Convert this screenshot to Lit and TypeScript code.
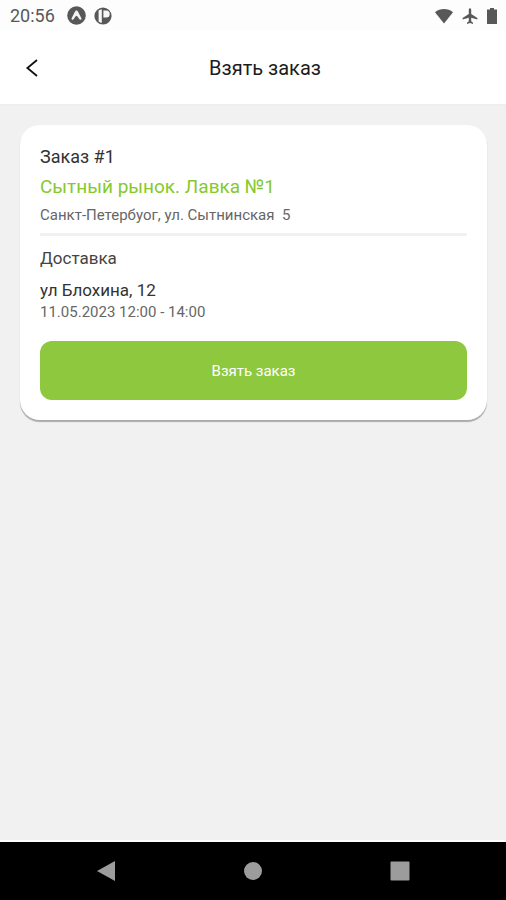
import { LitElement, html, css } from "lit";
import { customElement, property } from "lit/decorators.js";

@customElement("status-bar")
class StatusBar extends LitElement {
  static styles = css`
    :host {
      display: flex;
      align-items: center;
      justify-content: space-between;
      height: 31px;
      padding: 0 8px 0 10px;
      color: #585858;
      background: #fdfdfd;
    }
    .group {
      display: flex;
      align-items: center;
    }
    .left {
      gap: 8px;
    }
    .right {
      gap: 7px;
    }
    .time {
      font-size: 18px;
      line-height: 20px;
      margin-right: 4px;
    }
    svg {
      display: block;
    }
  `;

  render() {
    return html`
      <div class="group left">
        <span class="time">20:56</span>
        <svg width="19" height="19" viewBox="0 0 19 19" aria-hidden="true">
          <circle cx="9.5" cy="9.5" r="9.3" fill="#585858" />
          <path
            d="M9.5 4.6C8.6 4.6 8.2 5.3 7.8 6L4.6 12.2C4.1 13.3 5.4 14.5 6.5 13.3C7.6 12 8.6 9.7 9.5 9.7S11.4 12 12.5 13.3C13.6 14.5 14.9 13.3 14.4 12.2L11.2 6C10.8 5.3 10.4 4.6 9.5 4.6Z"
            fill="#f4f4f4"
          />
        </svg>
        <svg width="18" height="18" viewBox="0 0 18 18" aria-hidden="true">
          <circle cx="9" cy="9" r="8.6" fill="#585858" />
          <path d="M4.6 3.6Q6 2.4 7.8 2.2V15.8Q6 15.6 4.6 14.4Z" fill="#f8f8f8" />
          <path d="M9.4 3.4H12.2A3.5 3.5 0 0 1 12.2 10.4H9.4Z" fill="#f8f8f8" />
        </svg>
      </div>
      <div class="group right">
        <svg width="20" height="16" viewBox="0 0 20 16" aria-hidden="true">
          <path d="M1 4.2C6 -0.2 14 -0.2 19 4.2L10 15.4Z" fill="#585858" />
        </svg>
        <svg width="18" height="18" viewBox="0 0 18 18" aria-hidden="true">
          <path
            d="M9 1.2C9.9 1.2 10.2 2 10.2 2.8V7L16.4 10.9V12.5L10.2 10.7V14.3L12 15.7V16.9L9 16.1L6 16.9V15.7L7.8 14.3V10.7L1.6 12.5V10.9L7.8 7V2.8C7.8 2 8.1 1.2 9 1.2Z"
            fill="#585858"
          />
        </svg>
        <svg width="12" height="18" viewBox="0 0 12 18" aria-hidden="true">
          <path d="M4 1H8V2.6H11V17H1V2.6H4Z" fill="#585858" />
        </svg>
      </div>
    `;
  }
}

@customElement("page-header")
class PageHeader extends LitElement {
  @property() heading = "";

  static styles = css`
    :host {
      display: grid;
      grid-template-columns: 48px 1fr 24px;
      align-items: center;
      height: 73px;
      padding: 0 8px;
      background: #fff;
      border-bottom: 2px solid #eee;
    }
    .back {
      display: grid;
      place-items: center;
      width: 48px;
      height: 48px;
      padding: 0;
      border: 0;
      background: none;
      color: #111;
    }
    .title {
      margin: 0;
      font-size: 20px;
      line-height: 24px;
      font-weight: 400;
      text-align: center;
      color: #1c1c1c;
    }
  `;

  render() {
    return html`
      <button class="back" type="button" aria-label="Назад">
        <svg width="14" height="20" viewBox="0 0 14 20" aria-hidden="true">
          <path d="M12 2L2.4 10L12 18" fill="none" stroke="currentColor" stroke-width="1.8" />
        </svg>
      </button>
      <h1 class="title">${this.heading}</h1>
    `;
  }
}

@customElement("order-card")
class OrderCard extends LitElement {
  @property({ attribute: false }) order = {
    number: "",
    shop: "",
    pickup: "",
    address: "",
    time: "",
  };

  static styles = css`
    :host {
      display: block;
      padding: 20px;
      border-radius: 20px;
      background: #fff;
      box-shadow: 0 2px 1px #aaa;
    }
    h2,
    h3,
    p {
      margin: 0;
      font-weight: 400;
    }
    .number {
      font-size: 18px;
      line-height: 24px;
      color: #333;
    }
    .shop {
      margin-top: 6px;
      font-size: 19px;
      line-height: 24px;
      color: #86c92c;
    }
    .small {
      font-size: 15px;
      line-height: 20px;
      color: #666;
    }
    .pickup {
      margin-top: 6px;
      white-space: pre-wrap;
    }
    .rule {
      height: 3px;
      margin: 8px 0 10px;
      border: 0;
      background: #f1f1f1;
    }
    .label,
    .address {
      font-size: 17px;
      line-height: 24px;
      color: #444;
    }
    .address {
      margin-top: 8px;
      color: #333;
    }
    .take {
      display: block;
      width: 100%;
      height: 59px;
      margin-top: 19px;
      padding: 0;
      border: 0;
      border-radius: 12px;
      background: #8dc83f;
      color: #fff;
      font: 400 15px/20px Roboto, sans-serif;
    }
  `;

  render() {
    const o = this.order;
    return html`
      <h2 class="number">Заказ #${o.number}</h2>
      <p class="shop">${o.shop}</p>
      <p class="small pickup">${o.pickup}</p>
      <hr class="rule" />
      <h3 class="label">Доставка</h3>
      <p class="address">${o.address}</p>
      <p class="small">${o.time}</p>
      <button class="take" type="button">Взять заказ</button>
    `;
  }
}

@customElement("system-nav")
class SystemNav extends LitElement {
  static styles = css`
    :host {
      display: grid;
      grid-template-columns: repeat(3, 1fr);
      height: 58px;
      padding: 0 33px;
      border-top: 2px solid #fff;
      background: #000;
    }
    button {
      display: grid;
      place-items: center;
      padding: 0;
      border: 0;
      background: none;
      color: #9c9c9c;
    }
  `;

  render() {
    return html`
      <button type="button" aria-label="Назад">
        <svg width="20" height="22" viewBox="0 0 20 22"><path d="M19 1V21L1 11Z" fill="currentColor" /></svg>
      </button>
      <button type="button" aria-label="Домой">
        <svg width="20" height="20" viewBox="0 0 20 20"><circle cx="10" cy="10" r="9" fill="currentColor" /></svg>
      </button>
      <button type="button" aria-label="Недавние">
        <svg width="20" height="20" viewBox="0 0 20 20">
          <rect x="0.5" y="0.5" width="19" height="19" rx="1" fill="currentColor" />
        </svg>
      </button>
    `;
  }
}

@customElement("app-root")
class AppRoot extends LitElement {
  static styles = css`
    :host {
      display: flex;
      flex-direction: column;
      min-height: 100vh;
      background: #f1f1f1;
      font-family: Roboto, "Noto Sans", sans-serif;
    }
    main {
      flex: 1;
      padding: 19px 19px 19px 20px;
    }
  `;

  private order = {
    number: "1",
    shop: "Сытный рынок. Лавка №1",
    pickup: "Санкт-Петербуог, ул. Сытнинская  5",
    address: "ул Блохина, 12",
    time: "11.05.2023 12:00 - 14:00",
  };

  render() {
    return html`
      <status-bar></status-bar>
      <page-header heading="Взять заказ"></page-header>
      <main><order-card .order=${this.order}></order-card></main>
      <system-nav></system-nav>
    `;
  }
}
